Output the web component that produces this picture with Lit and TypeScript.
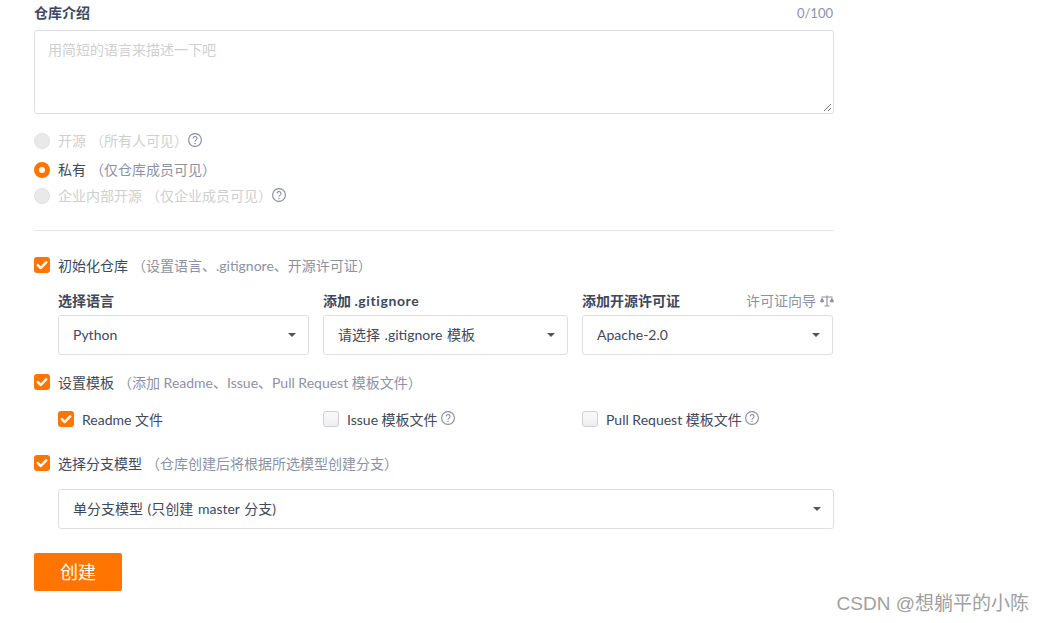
import { LitElement, html, css } from "lit";
import { customElement } from "lit/decorators.js";

const help = html`<svg class="help" viewBox="0 0 14 14" width="14" height="14" aria-hidden="true">
  <circle cx="7" cy="7" r="6.4" fill="none" stroke="#868ca0" stroke-width="1.1"/>
  <path d="M5.1 5.5a1.95 1.95 0 1 1 3 1.6c-.7.45-1.1.8-1.1 1.6" fill="none" stroke="#868ca0" stroke-width="1.1"/>
  <circle cx="7" cy="10.4" r=".75" fill="#868ca0"/>
</svg>`;

const tick = html`<svg viewBox="0 0 16 16" width="16" height="16" aria-hidden="true">
  <path d="M3.8 8.2 6.8 11l5.4-5.6" fill="none" stroke="#fff" stroke-width="2.5" stroke-linecap="round" stroke-linejoin="round"/>
</svg>`;

@customElement("app-root")
export class AppRoot extends LitElement {
  static styles = css`
    :host {
      display: block;
      position: relative;
      width: 1044px;
      height: 623px;
      overflow: hidden;
      background: #fff;
      font-family: Lato, "Noto Sans CJK SC", sans-serif;
      font-size: 14px;
      color: #40485b;
      box-sizing: border-box;
    }
    * { box-sizing: border-box; }
    .form {
      width: 800px;
      margin-left: 34px;
      display: flex;
      flex-direction: column;
    }
    .head {
      height: 26px;
      margin-bottom: 4px;
      display: flex;
      justify-content: space-between;
      align-items: center;
    }
    .title { font-weight: 700; font-size: 14px; line-height: 26px; color: #40485b; }
    .count { font-size: 13px; color: #8c92a4; margin-right: 1px; }
    .desc {
      position: relative;
      height: 84px;
      border: 1px solid #dedee4;
      border-radius: 3px;
      padding: 9px 13px;
      color: #cfcfcf;
      line-height: 20px;
    }
    .grip { position: absolute; right: 1px; bottom: 1px; }
    .radios { margin-top: 14px; display: flex; flex-direction: column; }
    .radio { display: flex; align-items: center; height: 26px; }
    .radio.r1 { height: 26px; margin-bottom: 3px; }
    .radio > span { padding-bottom: 2px; }
    .radio.disabled { color: #cfcfcf; }
    .radio.disabled .note { color: #cfcfcf; }
    .dot {
      width: 16px;
      height: 16px;
      border-radius: 50%;
      background: #e9e9e9;
      border: 1px solid #e0e0e0;
      margin-right: 8px;
      flex: none;
    }
    .dot.on { background: #fff; border: 5px solid #ff7500; }
    .note { color: #8c92a4; margin-left: 4px; }
    .help { display: block; flex: none; margin-bottom: 3px; }
    .check .help { margin-left: 3px; }
    .rule { height: 1px; background: #e3e6ec; margin-top: 21px; }
    .check { display: flex; align-items: center; height: 24px; }
    .box {
      width: 16px;
      height: 16px;
      border-radius: 3px;
      margin-right: 8px;
      flex: none;
      background: #ff7500;
    }
    .box svg { display: block; }
    .box.off {
      background: linear-gradient(#fafafa, #eeeef1);
      border: 1px solid #cfd0d6;
    }
    .init { margin-top: 22px; }
    .tree { margin-left: 24px; }
    .cols {
      display: grid;
      grid-template-columns: 251px 245px 251px;
      column-gap: 14px;
    }
    .fields { margin-top: 13px; }
    .field-head {
      height: 22px;
      display: flex;
      justify-content: space-between;
      align-items: center;
      font-weight: 700;
      font-size: 14px;
      line-height: 22px;
      margin-bottom: 3px;
    }
    .latin { letter-spacing: 0.6px; }
    .wizard {
      display: flex;
      align-items: center;
      gap: 4px;
      font-weight: 400;
      color: #8c92a4;
      margin-right: -1px;
    }
    .select {
      height: 40px;
      border: 1px solid #dedee4;
      border-radius: 3px;
      padding: 0 15px;
      display: flex;
      align-items: center;
      justify-content: space-between;
      color: #40485b;
      font-size: 14px;
      word-spacing: 1px;
    }
    .select > span { padding-bottom: 2px; margin-left: -1px; }
    .caret {
      width: 0;
      height: 0;
      border-left: 4px solid transparent;
      border-right: 4px solid transparent;
      border-top: 4px solid #555;
      margin-right: -3px;
      flex: none;
    }
    .tpl { margin-top: 15px; }
    .subs { margin-top: 13px; }
    .branch { margin-top: 20px; }
    .wide { margin-top: 14px; }
    .btn {
      margin-top: 24px;
      width: 88px;
      height: 38px;
      padding-bottom: 2px;
      background: #ff7500;
      border-radius: 2px;
      color: #fff;
      font-size: 18px;
      display: flex;
      align-items: center;
      justify-content: center;
    }
    .mark {
      position: absolute;
      right: 15px;
      top: 591px;
      font-family: "Liberation Sans", "Noto Sans CJK SC", sans-serif;
      font-size: 19px;
      line-height: 26px;
      color: #a0a0a0;
      white-space: nowrap;
    }
  `;

  private select(text: string) {
    return html`<div class="select"><span>${text}</span><i class="caret"></i></div>`;
  }

  private checkbox(label: string, note: string) {
    return html`<div class="check">
      <span class="box">${tick}</span><span>${label}</span><span class="note">${note}</span>
    </div>`;
  }

  render() {
    return html`
      <div class="form">
        <div class="head"><span class="title">仓库介绍</span><span class="count">0/100</span></div>
        <div class="desc">用简短的语言来描述一下吧
          <svg class="grip" width="10" height="10" viewBox="0 0 10 10" aria-hidden="true">
            <path d="M9 2 2 9M9 6 6 9" stroke="#777" stroke-width="1" fill="none"/>
          </svg>
        </div>

        <div class="radios">
          <div class="radio disabled r1"><i class="dot"></i><span>开源</span><span class="note">（所有人可见）</span>${help}</div>
          <div class="radio"><i class="dot on"></i><span>私有</span><span class="note">（仅仓库成员可见）</span></div>
          <div class="radio disabled"><i class="dot"></i><span>企业内部开源</span><span class="note">（仅企业成员可见）</span>${help}</div>
        </div>

        <div class="rule"></div>

        <div class="init">${this.checkbox("初始化仓库", "（设置语言、.gitignore、开源许可证）")}</div>
        <div class="tree fields cols">
          <div>
            <div class="field-head"><span>选择语言</span></div>
            ${this.select("Python")}
          </div>
          <div>
            <div class="field-head"><span>添加 <span class="latin">.gitignore</span></span></div>
            ${this.select("请选择 .gitignore 模板")}
          </div>
          <div>
            <div class="field-head">
              <span>添加开源许可证</span>
              <span class="wizard">许可证向导
                <svg width="14" height="12" viewBox="0 0 14 12" aria-hidden="true">
                  <path d="M7 .5v10M4.5 11h5M1.5 2h11" stroke="#8c92a4" stroke-width="1.2" fill="none"/>
                  <path d="M0 6.2a2.3 2.3 0 0 0 4.2 0L2.1 2.4zM9.8 6.2a2.3 2.3 0 0 0 4.2 0l-2.1-3.8z" fill="#8c92a4"/>
                </svg>
              </span>
            </div>
            ${this.select("Apache-2.0")}
          </div>
        </div>

        <div class="tpl">${this.checkbox("设置模板", "（添加 Readme、Issue、Pull Request 模板文件）")}</div>
        <div class="tree subs cols">
          <div class="check"><span class="box">${tick}</span><span>Readme 文件</span></div>
          <div class="check"><span class="box off"></span><span>Issue 模板文件</span>${help}</div>
          <div class="check"><span class="box off"></span><span>Pull Request 模板文件</span>${help}</div>
        </div>

        <div class="branch">${this.checkbox("选择分支模型", "（仓库创建后将根据所选模型创建分支）")}</div>
        <div class="tree wide">${this.select("单分支模型 (只创建 master 分支)")}</div>

        <div class="btn">创建</div>
      </div>
      <div class="mark">CSDN @想躺平的小陈</div>
    `;
  }
}
